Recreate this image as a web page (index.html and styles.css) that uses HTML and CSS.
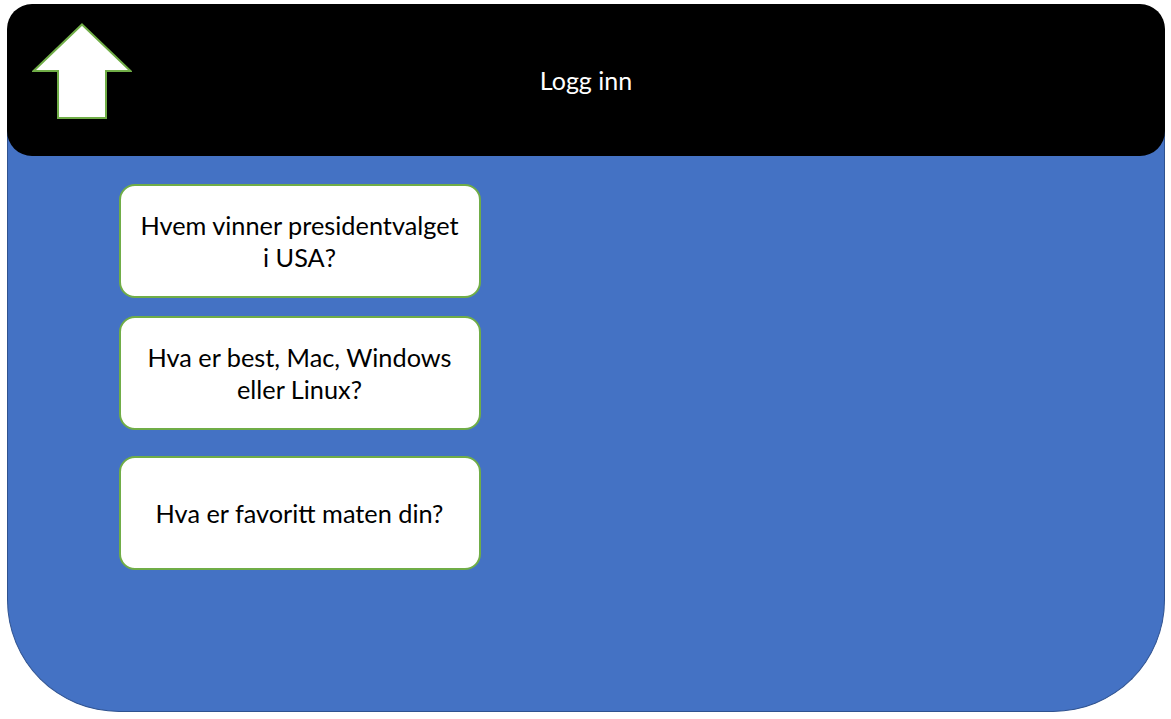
FILE: index.html
```html
<!DOCTYPE html>
<html lang="no">
<head>
<meta charset="utf-8">
<title>Logg inn</title>
<link rel="stylesheet" href="styles.css">
</head>
<body>
<div class="screen">
  <header class="header">
    <svg class="up-arrow" width="100" height="97" viewBox="0 0 100 97" aria-hidden="true">
      <polygon points="50,1.5 98.5,48 74,48 74,95 26,95 26,48 1.5,48" fill="#ffffff" stroke="#70AD47" stroke-width="2" stroke-linejoin="miter"/>
    </svg>
    <div class="title">Logg inn</div>
  </header>
  <main class="panel">
    <div class="card card-first">Hvem vinner presidentvalget<br>i USA?</div>
    <div class="card card-second">Hva er best, Mac, Windows<br>eller Linux?</div>
    <div class="card card-third">Hva er favoritt maten din?</div>
  </main>
</div>
</body>
</html>
```
FILE: styles.css
```css
html, body {
  margin: 0;
  padding: 0;
  background: #ffffff;
}

body {
  font-family: Lato, "Open Sans", "Liberation Sans", sans-serif;
}

.screen {
  width: 1158px;
  margin: 4px 0 0 7px;
}

.header {
  position: relative;
  z-index: 1;
  height: 152px;
  background: #000000;
  border-radius: 25px;
  display: grid;
  grid-template-columns: 1fr auto 1fr;
  align-items: center;
}

.up-arrow {
  grid-column: 1;
  grid-row: 1;
  justify-self: start;
  align-self: start;
  margin: 19px 0 0 25px;
  display: block;
}

.title {
  grid-column: 2;
  grid-row: 1;
  color: #ffffff;
  font-size: 25px;
  line-height: 32px;
}

.panel {
  margin-top: -26px;
  height: 582px;
  box-sizing: border-box;
  background: #4472C4;
  border: 1.5px solid #2F528F;
  border-top: none;
  border-radius: 0 0 112px 112px;
  padding: 54px 0 0 110.5px;
  display: flex;
  flex-direction: column;
  align-items: flex-start;
}

.card {
  flex-shrink: 0;
  width: 362px;
  height: 114px;
  box-sizing: border-box;
  background: #ffffff;
  border: 2px solid #70AD47;
  border-radius: 16px;
  display: flex;
  align-items: center;
  justify-content: center;
  text-align: center;
  font-size: 25.3px;
  line-height: 32px;
  color: #000000;
}

.card-second {
  margin-top: 18px;
}

.card-third {
  margin-top: 26px;
}
```
